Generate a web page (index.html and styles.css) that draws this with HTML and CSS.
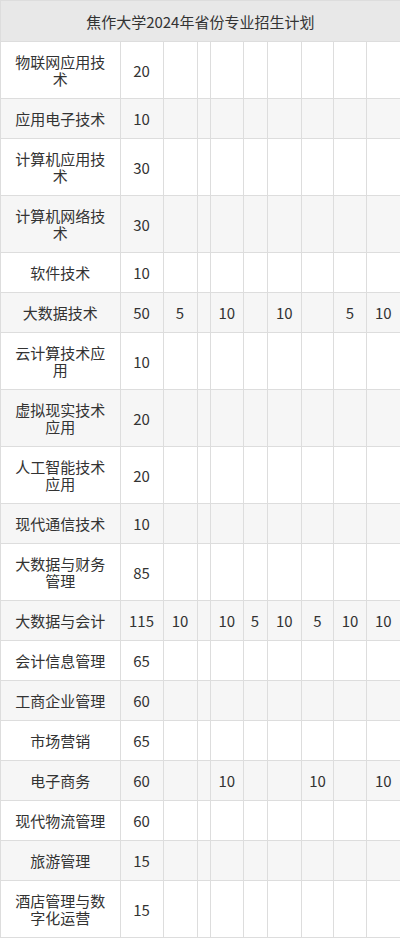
FILE: index.html
```html
<!DOCTYPE html>
<html lang="zh">
<head>
<meta charset="utf-8">
<link rel="stylesheet" href="styles.css">
</head>
<body>
<table class="plan">
  <colgroup>
    <col class="c-name"><col class="c-total"><col class="c3"><col class="c4"><col class="c5"><col class="c6"><col class="c7"><col class="c8"><col class="c9"><col class="c10">
  </colgroup>
  <thead>
    <tr><th colspan="10">焦作大学2024年省份专业招生计划</th></tr>
  </thead>
  <tbody>
    <tr><td class="name">物联网应用技术</td><td>20</td><td></td><td></td><td></td><td></td><td></td><td></td><td></td><td></td></tr>
    <tr><td class="name">应用电子技术</td><td>10</td><td></td><td></td><td></td><td></td><td></td><td></td><td></td><td></td></tr>
    <tr><td class="name">计算机应用技术</td><td>30</td><td></td><td></td><td></td><td></td><td></td><td></td><td></td><td></td></tr>
    <tr><td class="name">计算机网络技术</td><td>30</td><td></td><td></td><td></td><td></td><td></td><td></td><td></td><td></td></tr>
    <tr><td class="name">软件技术</td><td>10</td><td></td><td></td><td></td><td></td><td></td><td></td><td></td><td></td></tr>
    <tr><td class="name">大数据技术</td><td>50</td><td>5</td><td></td><td>10</td><td></td><td>10</td><td></td><td>5</td><td>10</td></tr>
    <tr><td class="name">云计算技术应用</td><td>10</td><td></td><td></td><td></td><td></td><td></td><td></td><td></td><td></td></tr>
    <tr><td class="name">虚拟现实技术应用</td><td>20</td><td></td><td></td><td></td><td></td><td></td><td></td><td></td><td></td></tr>
    <tr><td class="name">人工智能技术应用</td><td>20</td><td></td><td></td><td></td><td></td><td></td><td></td><td></td><td></td></tr>
    <tr><td class="name">现代通信技术</td><td>10</td><td></td><td></td><td></td><td></td><td></td><td></td><td></td><td></td></tr>
    <tr><td class="name">大数据与财务管理</td><td>85</td><td></td><td></td><td></td><td></td><td></td><td></td><td></td><td></td></tr>
    <tr><td class="name">大数据与会计</td><td>115</td><td>10</td><td></td><td>10</td><td>5</td><td>10</td><td>5</td><td>10</td><td>10</td></tr>
    <tr><td class="name">会计信息管理</td><td>65</td><td></td><td></td><td></td><td></td><td></td><td></td><td></td><td></td></tr>
    <tr><td class="name">工商企业管理</td><td>60</td><td></td><td></td><td></td><td></td><td></td><td></td><td></td><td></td></tr>
    <tr><td class="name">市场营销</td><td>65</td><td></td><td></td><td></td><td></td><td></td><td></td><td></td><td></td></tr>
    <tr><td class="name">电子商务</td><td>60</td><td></td><td></td><td>10</td><td></td><td></td><td>10</td><td></td><td>10</td></tr>
    <tr><td class="name">现代物流管理</td><td>60</td><td></td><td></td><td></td><td></td><td></td><td></td><td></td><td></td></tr>
    <tr><td class="name">旅游管理</td><td>15</td><td></td><td></td><td></td><td></td><td></td><td></td><td></td><td></td></tr>
    <tr><td class="name">酒店管理与数字化运营</td><td>15</td><td></td><td></td><td></td><td></td><td></td><td></td><td></td><td></td></tr>
  </tbody>
</table>
</body>
</html>
```

FILE: styles.css
```css
html, body {
  margin: 0;
  padding: 0;
  background: #ffffff;
}
body {
  font-family: "Noto Sans CJK SC", "Noto Sans", sans-serif;
  font-size: 15px;
  color: #333333;
}
.plan {
  width: 400px;
  table-layout: fixed;
  border-collapse: collapse;
}
.c-name { width: 119.5px; }
.c-total { width: 43px; }
.c3 { width: 34px; }
.c4 { width: 13.5px; }
.c5 { width: 32.5px; }
.c6 { width: 24px; }
.c7 { width: 34.5px; }
.c8 { width: 32px; }
.c9 { width: 33px; }
.c10 { width: 33.5px; }
.plan th {
  background: #e8e8e8;
  font-weight: normal;
  height: 40px;
  padding: 0;
  line-height: 17px;
  border: 1px solid #dddddd;
  text-align: center;
}
.plan td {
  border: 1px solid #dddddd;
  padding: 11px 0;
  line-height: 17px;
  text-align: center;
  vertical-align: middle;
  white-space: nowrap;
}
.plan td.name {
  padding-left: 8px;
  padding-right: 8px;
  white-space: normal;
}
.plan tbody tr:nth-child(even) td {
  background: #f6f6f6;
}
```
